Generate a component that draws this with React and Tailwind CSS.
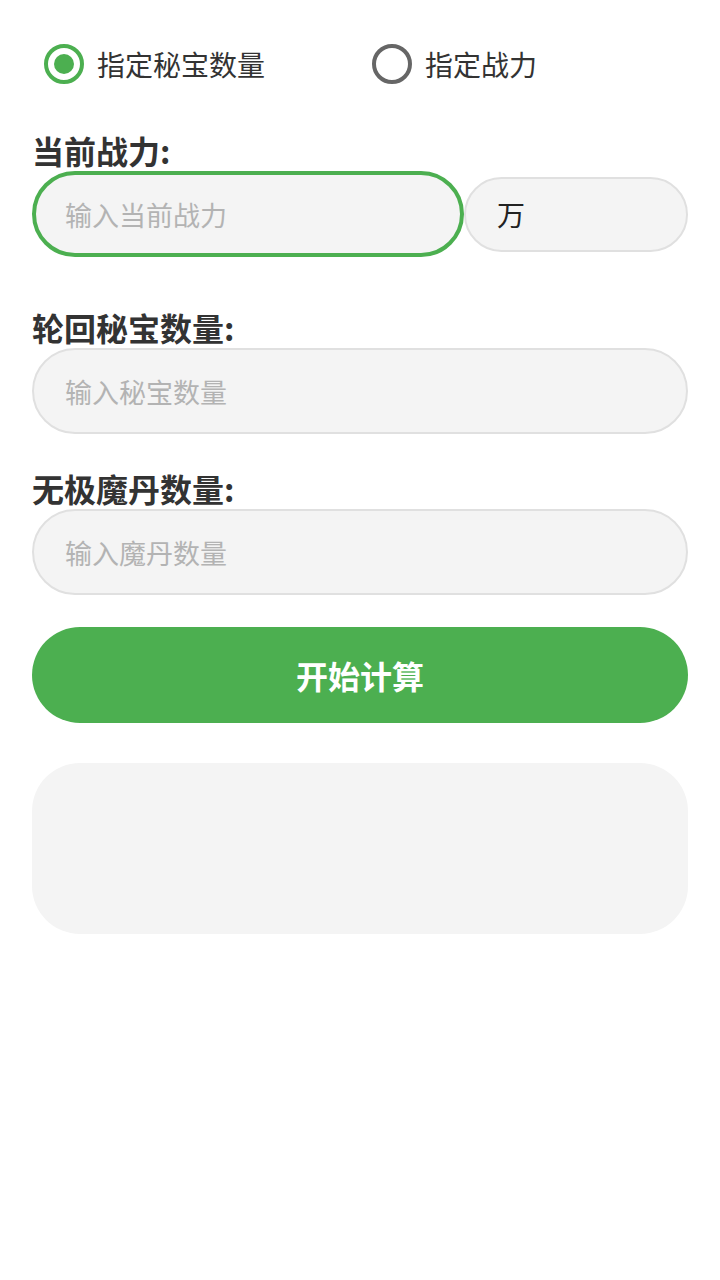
import { useState } from 'react'

const font = { fontFamily: '"Noto Sans CJK SC", "Noto Sans", sans-serif' }

function Radio({ checked, label, onClick }) {
  return (
    <button type="button" onClick={onClick} className="flex items-center gap-[13px] pl-3 py-3 text-left">
      <span className={`w-10 h-10 rounded-full border-4 flex items-center justify-center ${checked ? 'border-[#4caf50]' : 'border-[#666666]'}`}>
        {checked && <span className="w-5 h-5 rounded-full bg-[#4caf50]" />}
      </span>
      <span className="text-[28px] leading-none text-[#333333]">{label}</span>
    </button>
  )
}

function Label({ children }) {
  return <label className="block text-[32px] leading-[34px] mb-1 font-bold text-[#333333]">{children}</label>
}

function Field({ label, placeholder, value, onChange }) {
  return (
    <div>
      <Label>{label}</Label>
      <input
        value={value}
        onChange={e => onChange(e.target.value)}
        placeholder={placeholder}
        className="w-full h-[86px] rounded-full bg-[#f4f4f4] border-2 border-[#e0e0e0] px-[31px] text-[27px] text-[#333333] placeholder:text-[#b3b3b3] outline-none"
      />
    </div>
  )
}

export default function App() {
  const [mode, setMode] = useState('treasure')
  const [power, setPower] = useState('')
  const [treasure, setTreasure] = useState('')
  const [pill, setPill] = useState('')
  const [result, setResult] = useState('')

  const calc = () => setResult('')

  return (
    <div className="min-h-[1280px] bg-white px-8 pt-8" style={font}>
      <div className="grid grid-cols-2">
        <Radio checked={mode === 'treasure'} label="指定秘宝数量" onClick={() => setMode('treasure')} />
        <Radio checked={mode === 'power'} label="指定战力" onClick={() => setMode('power')} />
      </div>

      <div className="mt-[37px]">
        <Label>当前战力:</Label>
        <div className="flex items-center">
          <input
            value={power}
            onChange={e => setPower(e.target.value)}
            placeholder="输入当前战力"
            className="w-[432px] h-[86px] rounded-full bg-[#f4f4f4] border-4 border-[#4caf50] px-[29px] text-[27px] text-[#333333] placeholder:text-[#b3b3b3] outline-none"
          />
          <div className="flex-1 h-[75px] rounded-full bg-[#f4f4f4] border-2 border-[#e0e0e0] flex items-center pl-[31px] text-[28px] text-[#222222]">万</div>
        </div>
      </div>

      <div className="mt-[53px] flex flex-col gap-[37px]">
        <Field label="轮回秘宝数量:" placeholder="输入秘宝数量" value={treasure} onChange={setTreasure} />
        <Field label="无极魔丹数量:" placeholder="输入魔丹数量" value={pill} onChange={setPill} />
      </div>

      <button
        type="button"
        onClick={calc}
        className="mt-8 w-full h-24 rounded-full bg-[#4caf50] text-white text-[32px] font-bold"
      >
        开始计算
      </button>

      <div className="mt-10 h-[171px] rounded-[48px] bg-[#f4f4f4] p-8 text-[26px] text-[#333333]">{result}</div>
    </div>
  )
}
